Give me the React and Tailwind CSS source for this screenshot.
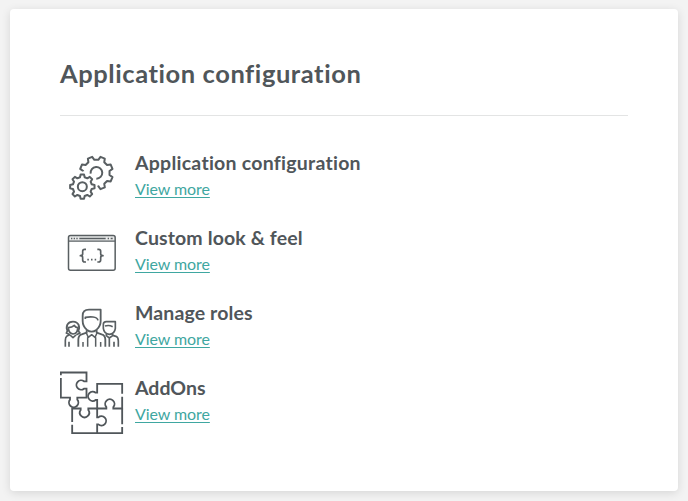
import React from "react";

const point = (cx, cy, r, deg) => {
  const a = (deg * Math.PI) / 180;
  return `${(cx + r * Math.cos(a)).toFixed(1)} ${(cy + r * Math.sin(a)).toFixed(1)}`;
};

// Outline of the gear teeth centred on each of the given angles.
const teeth = (cx, cy, inner, outer, angles) =>
  angles
    .map(
      (a) =>
        `L${point(cx, cy, inner, a - 14)} L${point(cx, cy, outer, a - 8)} L${point(cx, cy, outer, a + 8)} L${point(cx, cy, inner, a + 14)}`
    )
    .join(" ");

const smallGear =
  teeth(79, 116, 29, 37, [0, 45, 90, 135, 180, 225, 270, 315]).replace("L", "M") + "Z";
const bigGear =
  `M${point(121, 75, 40, 188)} ` +
  teeth(121, 75, 40, 50, [202.5, 247.5, 292.5, 337.5, 382.5, 427.5]) +
  ` L${point(121, 75, 44, 438)}`;

function Icon({ viewBox, children }) {
  return (
    <svg
      viewBox={viewBox}
      className="size-16 shrink-0"
      fill="none"
      stroke="#595f62"
      strokeWidth="5.500"
      strokeLinejoin="round"
    >
      {children}
    </svg>
  );
}

const Gears = () => (
  <Icon viewBox="12 -6 192 192">
    <path d={bigGear} strokeWidth="6" />
    <path d="M104 77A17.500 17.500 0 1 1 121 92" strokeWidth="6" />
    <path d={smallGear} strokeWidth="6" />
    <circle cx="79" cy="116" r="13.500" strokeWidth="6" />
  </Icon>
);

const CodeWindow = () => (
  <Icon viewBox="12 -12 192 192">
    <path d="M39 48V37Q39 32 44 32H172Q177 32 177 37V48Z" fill="#e9eaea" stroke="none" />
    <rect x="37.500" y="31.500" width="140" height="104.500" rx="6" strokeWidth="4.500" />
    <path d="M39 48.500H177" strokeWidth="4" />
    <path d="M45 40.500H49M53 40.500H57M61 40.500H65M70 40.500H149M155 40.500H159M164 40.500H170" strokeWidth="4.500" />
    <path d="M90 73H86Q80 73 80 79V87Q80 92 73 92Q80 92 80 98V105Q80 111 86 111H90M124 73H128Q134 73 134 79V87Q134 92 141 92Q134 92 134 98V105Q134 111 128 111H124" strokeWidth="5" />
    <path d="M94 104H98.500M105 104H109.500M116 104H120.500" strokeWidth="5" />
  </Icon>
);

const People = () => (
  <Icon viewBox="12 -12 192 192">
    <path d="M80 58V47Q80 29 99 29H134V63Q134 78 122 89Q107 101 92 89Q80 78 80 63Z" />
    <path d="M88 57V52Q100 50 111 51Q124 52 126 61" strokeWidth="5" />
    <path d="M92 91V98L77 103Q67 106 67 119V140M122 91V98L137 103Q148 106 148 119V140" />
    <path d="M91 99L97 112L107 104L117 112L123 99M95 112V140M119 112V140M81 126V140M134 126V140" strokeWidth="4.500" />
    <path d="M36 94Q29 85 34 74Q39 65 51 65Q63 65 68 75Q72 86 65 95" />
    <path d="M37 83Q48 82 55 76Q58 82 65 83Q65 101 51 102Q38 101 37 83Z" strokeWidth="5" />
    <path d="M35 91L31 99L42 104M66 92L72 99L61 104M41 104L33 108Q28 111 28 121V140M42 105L51 113L60 105M39 125V140" strokeWidth="5" />
    <path d="M142 79V73Q142 65 151 65H178V85Q176 102 160 103Q144 101 142 85ZM147 78Q159 74 170 80" strokeWidth="5" />
    <path d="M151 102V107L160 114L170 107V102M170 106L180 109Q187 112 187 123V140M174 125V140M160 114V140" strokeWidth="5" />
  </Icon>
);

const Puzzle = () => (
  <Icon viewBox="18 18 192 192">
    <g strokeLinejoin="miter" stroke="#50565a">
      <path d="M20.500 31V22.500H97.500V49H90A14 14 0 1 0 90 71H97.500V98H70V104A14 14 0 1 1 48 104V98H20.500V39" />
      <path d="M204.500 86V56.500H129.500V83H125A14 14 0 1 0 125 105H129.500V130.500H157V126A14 14 0 1 1 178 126V130.500H204.500V95" />
      <path d="M204.500 130.500V178M204.500 186V204.500H54.500V179M54.500 171V130.500H80V135A14 14 0 1 0 103 135V130.500H129.500V157H133A14 14 0 1 1 133 178H129.500V204.500" />
    </g>
  </Icon>
);

const items = [
  { title: "Application configuration", icon: Gears, tracking: "tracking-[0.250px]" },
  { title: "Custom look & feel", icon: CodeWindow, tracking: "tracking-[0.130px]" },
  { title: "Manage roles", icon: People, tracking: "tracking-[0.120px]" },
  { title: "AddOns", icon: Puzzle, tracking: "tracking-[0px]" },
];

export default function App() {
  return (
    <main className="h-[501px] w-[688px] bg-[#f3f3f3] px-[10px] pt-[9px] font-['Lato',sans-serif] text-[#50565a]">
      <section className="h-[482px] w-[668px] rounded-[4px] bg-white px-[50px] pt-[48px] shadow-[0_2px_10px_rgba(0,0,0,0.12)]">
        <h1 className="h-[59px] border-b border-[#e3e4e4] text-[25.500px] leading-[32px] font-bold tracking-[0.570px] whitespace-nowrap">
          Application configuration
        </h1>
        <ul className="mt-[30px] flex w-full flex-col gap-[11px]">
          {items.map(({ title, icon: Glyph, tracking }) => (
            <li key={title} className="flex h-16 gap-[11px]">
              <Glyph />
              <div className="flex flex-col items-start pt-[4px]">
                <h2 className={`text-[19.500px] leading-[26px] font-bold whitespace-nowrap ${tracking}`}>{title}</h2>
                <a href="#" className="text-[16px] leading-[26px] tracking-[-0.080px] text-[#3fa7a1] underline underline-offset-[2px] whitespace-nowrap">
                  View more
                </a>
              </div>
            </li>
          ))}
        </ul>
      </section>
    </main>
  );
}
